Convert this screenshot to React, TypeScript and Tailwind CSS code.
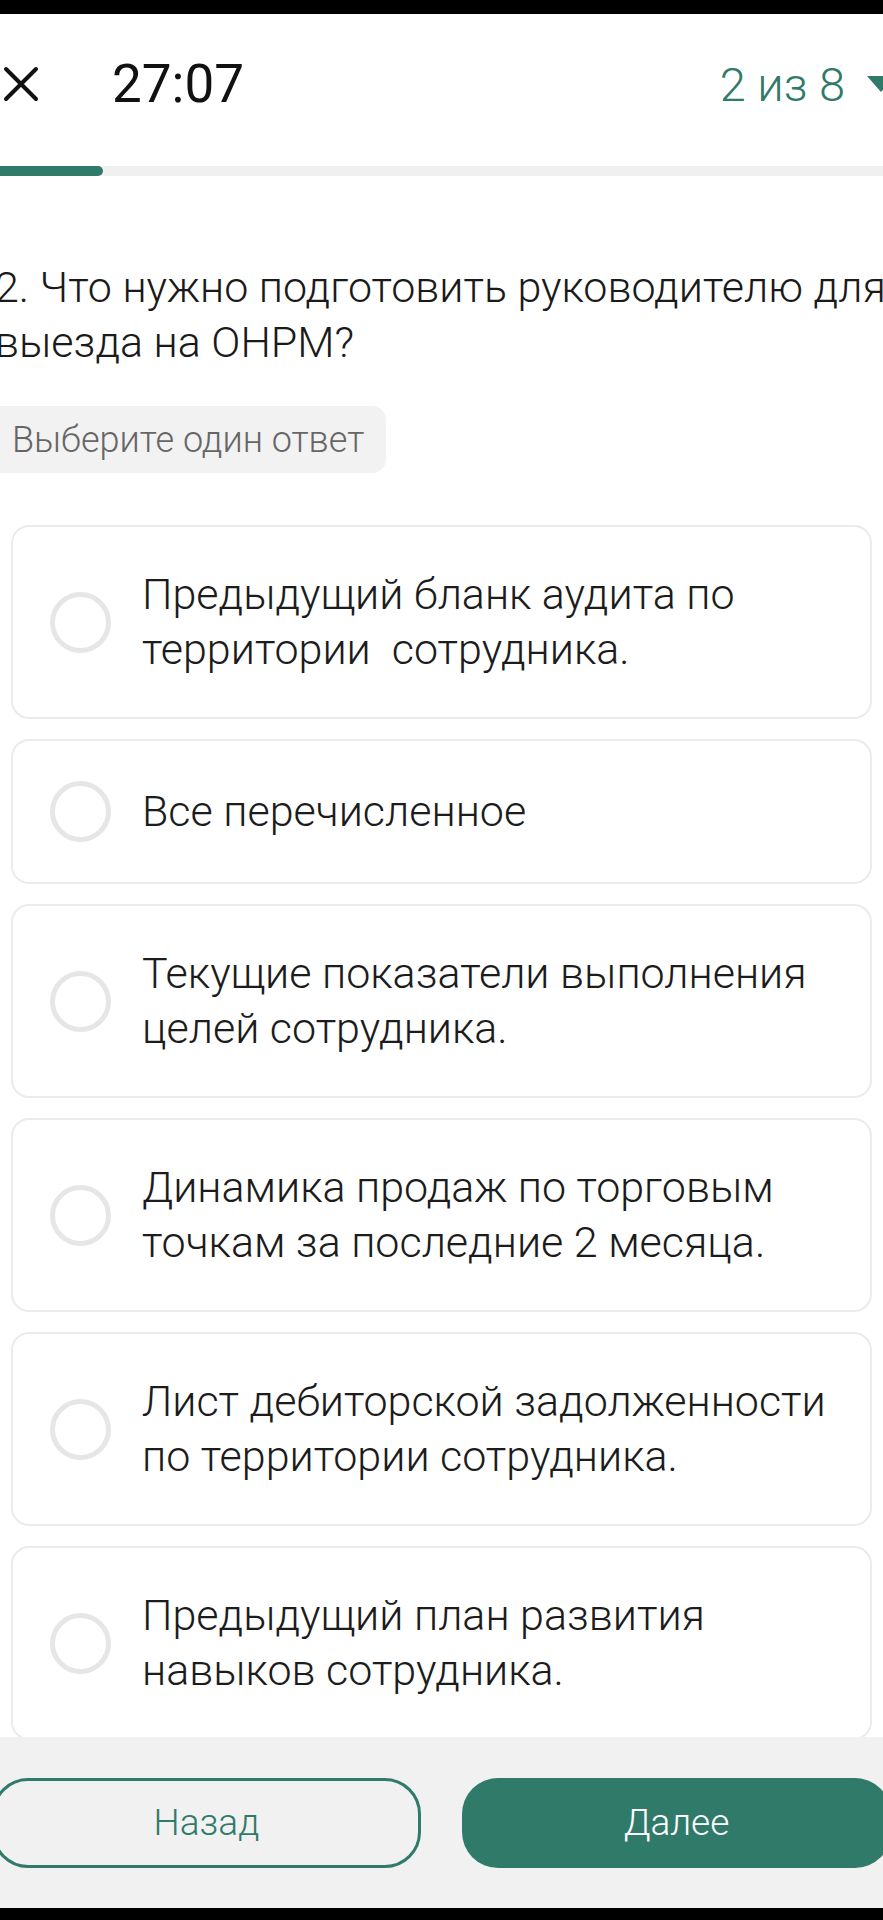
import type { ReactNode } from 'react'

const GREEN = '#307a6a'

const options = [
  ['Предыдущий бланк аудита по', 'территории\u00a0 сотрудника.'],
  ['Все перечисленное'],
  ['Текущие показатели выполнения', 'целей сотрудника.'],
  ['Динамика продаж по торговым', 'точкам за последние 2 месяца.'],
  ['Лист дебиторской задолженности', 'по территории сотрудника.'],
  ['Предыдущий план развития', 'навыков сотрудника.'],
]

function Option({ lines }: { lines: string[] }) {
  return (
    <div className="flex items-center min-h-[145px] py-[40px] rounded-[18px] border-2 border-[#ebebeb] bg-white shrink-0">
      <span className="ml-[37px] w-[61px] h-[61px] rounded-full border-[5px] border-[#e6e6e6] shrink-0" />
      <div className="ml-[31px] text-[43px] font-light leading-[55px] text-[#1c1c1c]">
        {lines.map((l, i) => (
          <div key={i} className="whitespace-pre">{l}</div>
        ))}
      </div>
    </div>
  )
}

function Button({ children, filled }: { children: ReactNode; filled?: boolean }) {
  return (
    <button
      className={
        filled
          ? 'w-[429px] h-[90px] shrink-0 rounded-[36px] bg-[#307a6a] text-white text-[37px] font-light'
          : 'w-[429px] h-[90px] shrink-0 rounded-[36px] border-[3px] border-[#307a6a] text-[#307a6a] text-[37px] font-light'
      }
    >
      {children}
    </button>
  )
}

export default function App() {
  return (
    <div
      className="w-[883px] h-[1920px] flex flex-col bg-white overflow-hidden"
      style={{ fontFamily: 'Roboto, "Noto Sans", sans-serif' }}
    >
      <div className="h-[14px] bg-black shrink-0" />

      {/* header: close, timer, question counter */}
      <div className="h-[140px] flex items-center shrink-0">
        <svg className="ml-[3px] shrink-0" width="36" height="36" viewBox="0 0 36 36" fill="none" stroke="#111" strokeWidth="4" strokeLinecap="round">
          <path d="M3 3L33 33M33 3L3 33" />
        </svg>
        <span className="ml-[73px] text-[53px] leading-none text-[#111]">27:07</span>
        <div className="ml-auto mr-[-12px] flex items-center">
          <span className="text-[47px] font-light leading-none text-[#307a6a]">2 из 8</span>
          <svg className="ml-[22px]" width="28" height="16" viewBox="0 0 28 16">
            <path d="M0 0H28L14 16Z" fill={GREEN} />
          </svg>
        </div>
      </div>

      <div className="mt-[12px] h-[10px] bg-[#f0f0f0] shrink-0">
        <div className="h-full w-[103px] rounded-r-full bg-[#307a6a]" />
      </div>

      <div className="flex-1 min-h-0 overflow-hidden flex flex-col">
        <div className="shrink-0 mt-[84px] ml-[-5px] text-[43px] font-light leading-[55px] text-[#1a1a1a] whitespace-nowrap">
          <div>2. Что нужно подготовить руководителю для</div>
          <div>выезда на ОНРМ?</div>
        </div>

        <div className="shrink-0 mt-[36px] ml-[-20px] self-start h-[67px] flex items-center pl-[32px] pr-[22px] rounded-[14px] bg-[#f2f2f2]">
          <span className="text-[36px] font-light text-[#666]">Выберите один ответ</span>
        </div>

        <div className="shrink-0 mt-[52px] mx-[11px] flex flex-col gap-[20px]">
          {options.map((o, i) => (
            <Option key={i} lines={o} />
          ))}
        </div>
      </div>

      {/* footer buttons */}
      <div className="h-[171px] bg-[#f1f1f1] flex items-center justify-center gap-[41px] shrink-0">
        <Button>Назад</Button>
        <Button filled>Далее</Button>
      </div>
      <div className="h-[12px] bg-black shrink-0" />
    </div>
  )
}
